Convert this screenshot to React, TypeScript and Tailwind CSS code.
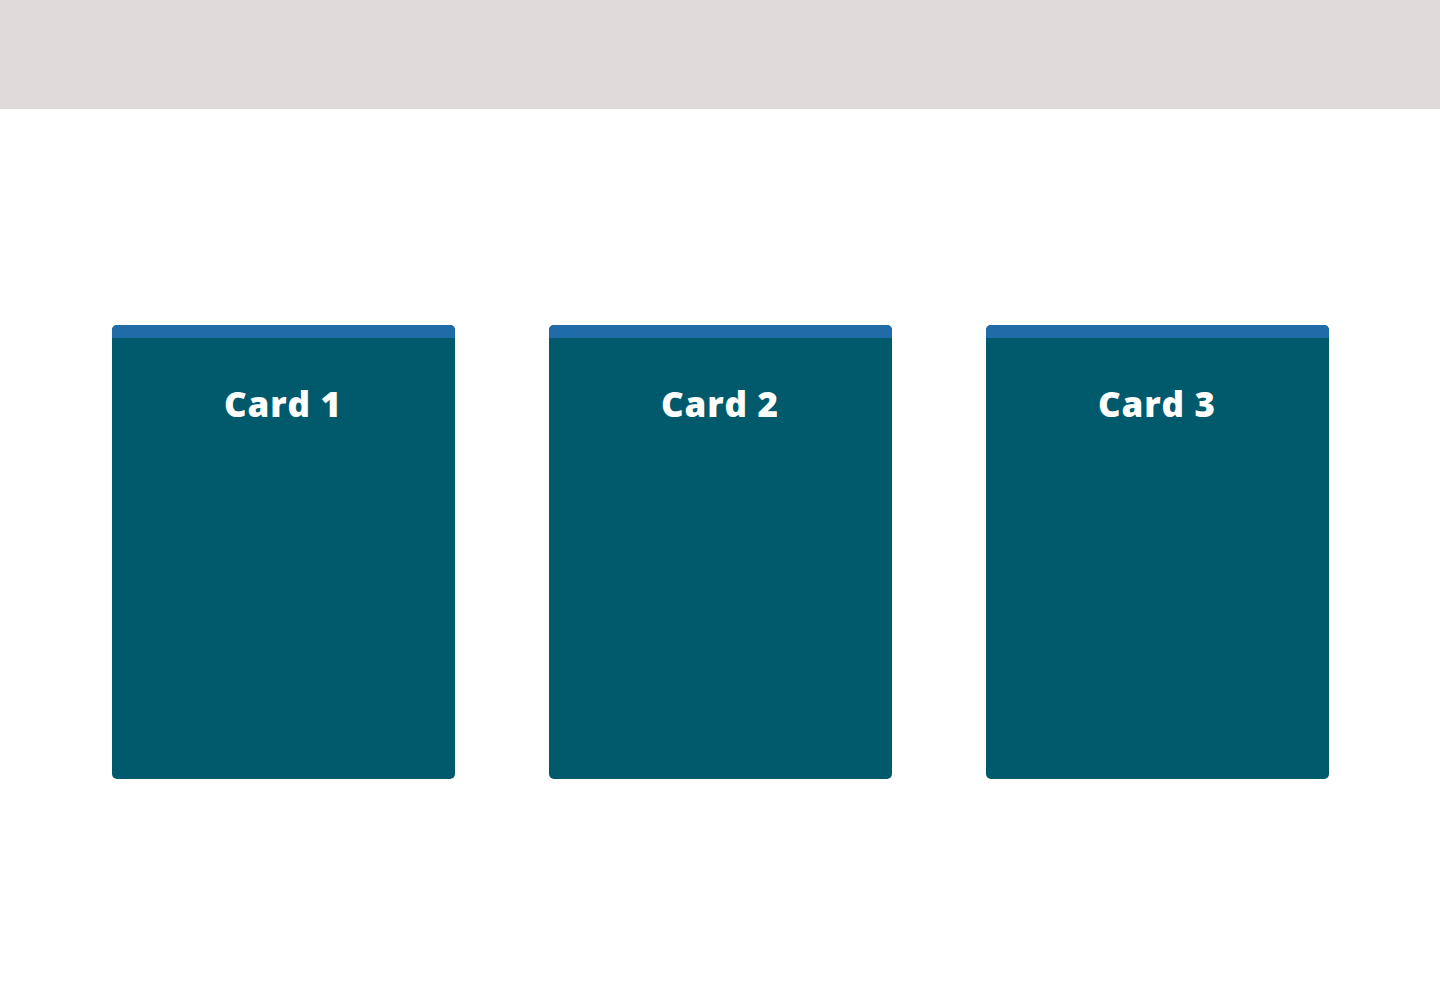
export default function App() {
  const cards = ["Card 1", "Card 2", "Card 3"];
  return (
    <div className="flex h-[994px] w-full flex-col bg-white font-['Open_Sans',sans-serif]">
      <header className="h-[109px] w-full bg-[#dfdbda]"></header>
      <main className="flex flex-1 items-center justify-center gap-[94px]">
        {cards.map((title) => (
          <div key={title} className="flex h-[454px] w-[343px] flex-col overflow-hidden rounded-[5px] bg-[#005a6b]">
            <div className="h-[13px] bg-[#1f6ca8]"></div>
            <h2 className="pt-[44px] text-center text-[35px] font-extrabold leading-[44px] tracking-[0.8px] text-white">{title}</h2>
          </div>
        ))}
      </main>
    </div>
  );
}
